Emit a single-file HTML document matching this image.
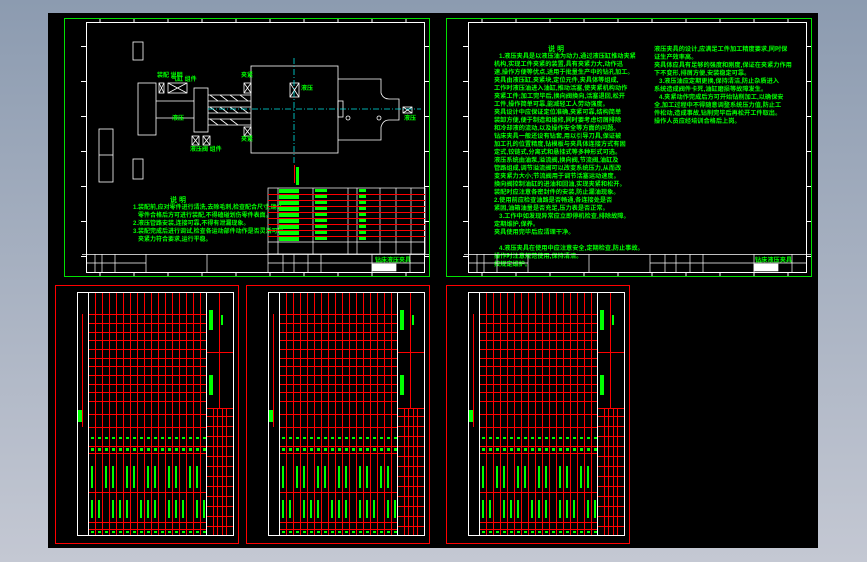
<!DOCTYPE html>
<html><head><meta charset="utf-8">
<style>
html,body{margin:0;padding:0;width:867px;height:562px;overflow:hidden;background:linear-gradient(#8c9bb0,#c4c8d3);}
svg{position:absolute;left:0;top:0}
text{font-family:"Liberation Sans","Noto Sans CJK SC",sans-serif;fill:#00ff00;font-weight:bold}
</style></head><body>
<svg id="s" width="867" height="562" viewBox="0 0 867 562" xmlns="http://www.w3.org/2000/svg">
<rect x="48" y="13" width="770" height="535" fill="#000"/>
<rect x="64.5" y="18.5" width="365" height="258" fill="none" stroke="#00e000" stroke-width="1"/>
<rect x="86.5" y="22.5" width="338" height="250" fill="none" stroke="#fff" stroke-width="1"/>
<g fill="none" stroke="#fff" stroke-width="0.8">
<rect x="133" y="42" width="10" height="18"/>
<rect x="138" y="83" width="18" height="52"/>
<line x1="156" y1="101" x2="194" y2="101"/><line x1="156" y1="118" x2="194" y2="118"/>
<rect x="194" y="88" width="14" height="44"/>
<rect x="251" y="66" width="87" height="87"/>
<path d="M338 79H381V93Q383 99 389 99H399V120H389Q383 120 381 127V140H338"/>
<rect x="99" y="129" width="14" height="53"/><line x1="99" y1="155" x2="113" y2="155"/>
<rect x="133" y="159" width="10" height="20"/>
<path d="M208 95H251M208 101H251M208 107H251M208 113H251M208 119H251M208 125H251"/>
<path d="M210 95l8 6M220 95l8 6M230 95l8 6M240 95l8 6M210 107l8 6M220 107l8 6M230 107l8 6M240 107l8 6M210 119l8 6M220 119l8 6M230 119l8 6"/>
<g id="xb"></g>
<circle cx="348" cy="118" r="2"/><circle cx="379" cy="118" r="2"/>
<rect x="338" y="101" width="5" height="16"/>
</g>
<g stroke="#00e5e5" stroke-width="0.8" stroke-dasharray="6 2 1 2">
<line x1="208" y1="109" x2="421" y2="109"/><line x1="294" y1="58" x2="294" y2="163"/>
</g>
<line x1="294.5" y1="165" x2="294.5" y2="183" stroke="#f00"/>
<rect x="296" y="167" width="3" height="18" fill="#0f0"/>
<g font-size="6">
<text x="157" y="77">装配 说明</text><text x="171" y="81">气缸 组件</text>
<text x="241" y="77">夹紧</text><text x="301" y="90">液压</text>
<text x="172" y="120">液压</text><text x="190" y="151">液压阀 组件</text>
<text x="241" y="141">夹紧</text><text x="404" y="120">液压</text>
<text x="170" y="202" font-size="7">说 明</text>
<text x="133" y="209">1.装配前,应对零件进行清洗,去除毛刺,检查配合尺寸,确认</text>
<text x="138" y="217">零件合格后方可进行装配,不得磕碰划伤零件表面。</text>
<text x="133" y="225">2.液压管路安装,连接可靠,不得有泄漏现象。</text>
<text x="133" y="233">3.装配完成后进行调试,检查各运动部件动作是否灵活可靠,</text>
<text x="138" y="241">夹紧力符合要求,运行平稳。</text>
<text x="375" y="262">钻床液压夹具</text>
</g>
<g id="tb1" stroke="#fff" stroke-width="0.7" fill="none"></g>
<rect x="446.5" y="18.5" width="365" height="258" fill="none" stroke="#00e000"/>
<rect x="468.5" y="22.5" width="338" height="250" fill="none" stroke="#fff"/>
<g font-size="6.2">
<text x="548" y="51" font-size="7">说 明</text>
<text x="499" y="58">1.液压夹具是以液压油为动力,通过液压缸推动夹紧</text>
<text x="494" y="66">机构,实现工件夹紧的装置,具有夹紧力大,动作迅</text>
<text x="494" y="74">速,操作方便等优点,适用于批量生产中的钻孔加工。</text>
<text x="494" y="82">夹具由液压缸,夹紧块,定位元件,夹具体等组成,</text>
<text x="494" y="90">工作时液压油进入油缸,推动活塞,使夹紧机构动作</text>
<text x="494" y="98">夹紧工件;加工完毕后,换向阀换向,活塞退回,松开</text>
<text x="494" y="106">工件,操作简单可靠,能减轻工人劳动强度。</text>
<text x="494" y="114">夹具设计中应保证定位准确,夹紧可靠,结构简单</text>
<text x="494" y="122">装卸方便,便于制造和维修,同时要考虑切屑排除</text>
<text x="494" y="130">和冷却液的流动,以及操作安全等方面的问题。</text>
<text x="494" y="138">钻床夹具一般还设有钻套,用以引导刀具,保证被</text>
<text x="494" y="146">加工孔的位置精度,钻模板与夹具体连接方式有固</text>
<text x="494" y="154">定式,铰链式,分离式和悬挂式等多种形式可选。</text>
<text x="494" y="162">液压系统由油泵,溢流阀,换向阀,节流阀,油缸及</text>
<text x="494" y="170">管路组成,调节溢流阀可以改变系统压力,从而改</text>
<text x="494" y="178">变夹紧力大小;节流阀用于调节活塞运动速度。</text>
<text x="494" y="186">换向阀控制油缸的进油和回油,实现夹紧和松开。</text>
<text x="494" y="194">装配时应注意各密封件的安装,防止漏油现象。</text>
<text x="494" y="202">2.使用前应检查油路是否畅通,各连接处是否</text>
<text x="494" y="210">紧固,油箱油量是否充足,压力表是否正常。</text>
<text x="499" y="218">3.工作中如发现异常应立即停机检查,排除故障。</text>
<text x="494" y="226">定期维护,保养。</text>
<text x="494" y="234">夹具使用完毕后应清理干净。</text>
<text x="499" y="250">4.液压夹具在使用中应注意安全,定期检查,防止事故。</text>
<text x="494" y="258">操作时注意规范使用,保持清洁。</text>
<text x="494" y="266">按规定维护。</text>
<text x="654" y="51">液压夹具的设计,应满足工件加工精度要求,同时保</text>
<text x="654" y="59">证生产效率高。</text>
<text x="654" y="67">夹具体应具有足够的强度和刚度,保证在夹紧力作用</text>
<text x="654" y="75">下不变形,排屑方便,安装稳定可靠。</text>
<text x="659" y="83">3.液压油应定期更换,保持清洁,防止杂质进入</text>
<text x="654" y="91">系统造成阀件卡死,油缸磨损等故障发生。</text>
<text x="659" y="99">4.夹紧动作完成后方可开始钻削加工,以确保安</text>
<text x="654" y="107">全,加工过程中不得随意调整系统压力值,防止工</text>
<text x="654" y="115">件松动,造成事故,钻削完毕后再松开工件取出。</text>
<text x="654" y="123">操作人员应经培训合格后上岗。</text>
<text x="755" y="262">钻床液压夹具</text>
</g>
<g id="tb2" stroke="#fff" stroke-width="0.7" fill="none"></g>
<g id="bot"></g>
</svg>
<script>
var NS="http://www.w3.org/2000/svg";
function el(p,t,a){var e=document.createElementNS(NS,t);for(var k in a)e.setAttribute(k,a[k]);p.appendChild(e);return e;}
function ln(p,x1,y1,x2,y2,c){return el(p,'line',{x1:x1,y1:y1,x2:x2,y2:y2,stroke:c,'stroke-width':1});}
var s=document.getElementById('s');
var xb=document.getElementById('xb');
[[168,83,19,10],[159,83,5,10],[244,83,7,10],[244,127,7,9],[290,83,9,14],[192,136,7,9],[203,136,7,9],[403,107,9,6]].forEach(function(b){
 el(xb,'rect',{x:b[0],y:b[1],width:b[2],height:b[3]});
 el(xb,'path',{d:'M'+b[0]+' '+b[1]+'l'+b[2]+' '+b[3]+'M'+(b[0]+b[2])+' '+b[1]+'l'+(-b[2])+' '+b[3]});
});
[0,382].forEach(function(o){
 var i,xx,yy;
 for(xx=100;xx<425;xx+=34){ln(s,xx+o,19,xx+o,22,'#fff');ln(s,xx+o,273,xx+o,276,'#fff');}
 for(yy=46;yy<270;yy+=35){ln(s,81+o,yy+.5,86+o,yy+.5,'#fff');ln(s,425+o,yy+.5,429+o,yy+.5,'#fff');}
 var t=document.getElementById(o?'tb2':'tb1');
 el(t,'line',{x1:82+o,y1:254.5,x2:429+o,y2:254.5});
 el(t,'line',{x1:86+o,y1:263,x2:146+o,y2:263});
 [95,102,115,146,207].forEach(function(v){el(t,'line',{x1:v+o,y1:254,x2:v+o,y2:272});});
 [268,283,294,308,321,372,410].forEach(function(v){el(t,'line',{x1:v+o,y1:254,x2:v+o,y2:272});});
 el(t,'line',{x1:268+o,y1:263,x2:321+o,y2:263});el(t,'line',{x1:321+o,y1:263,x2:425+o,y2:263});
 el(t,'rect',{x:372+o,y:264,width:24,height:7,fill:'#fff'});
});
var t1=document.getElementById('tb1');
el(t1,'rect',{x:268,y:188,width:157,height:66});
[278,313,348,357,380,396,411].forEach(function(v){el(t1,'line',{x1:v,y1:188,x2:v,y2:254});});
el(t1,'line',{x1:268,y1:242,x2:425,y2:242});
[194,200,206,212,218,224,230,236].forEach(function(v){ln(s,268,v+.5,425,v+.5,'#f00');});
for(var i=0;i<9;i++){el(s,'rect',{x:279,y:189+i*6,width:20,height:4,fill:'#0f0'});el(s,'rect',{x:315,y:189+i*6,width:12,height:3,fill:'#0f0'});el(s,'rect',{x:359,y:189+i*6,width:7,height:3,fill:'#0f0'});}
var bot=document.getElementById('bot');
[0,191,391].forEach(function(o){
 var cx,cy,k;
 el(bot,'rect',{x:55.5+o,y:285.5,width:183,height:258,fill:'none',stroke:'#f00'});
 for(k=1;k<17;k++){cx=88.5+k*7+o;ln(bot,cx,292,cx,536,'#f00');}
 [314,323,332,340,349,358,366,375,384,392,401,414,427,446,453,492,522,529].forEach(function(v){ln(bot,88+o,v+.5,206+o,v+.5,'#f00');});
 ln(bot,82.5+o,314,82.5+o,427,'#f00');
 ln(bot,219.5+o,292,219.5+o,408,'#f00');
 ln(bot,206+o,352.5,233+o,352.5,'#f00');
 ln(bot,206+o,408.5,233+o,408.5,'#f00');
 [213,217,222,226].forEach(function(v){ln(bot,v+.5+o,408,v+.5+o,536,'#f00');});
 for(cy=416;cy<536;cy+=10)ln(bot,206+o,cy+.5,233+o,cy+.5,'#f00');
 ln(bot,88.5+o,292,88.5+o,536,'#fff');
 ln(bot,206.5+o,292,206.5+o,536,'#fff');
 el(bot,'rect',{x:77.5+o,y:292.5,width:156,height:243,fill:'none',stroke:'#fff'});
 var G={fill:'#0f0'};
 el(bot,'rect',Object.assign({x:209+o,y:310,width:4,height:20},G));
 el(bot,'rect',Object.assign({x:209+o,y:375,width:4,height:20},G));
 el(bot,'rect',Object.assign({x:221+o,y:315,width:2,height:10},G));
 el(bot,'rect',Object.assign({x:78+o,y:410,width:4,height:12},G));
 for(k=0;k<17;k++){
  cx=90+k*7+o;
  el(bot,'rect',Object.assign({x:cx+1,y:437,width:3,height:2},G));
  el(bot,'rect',Object.assign({x:cx+1,y:448,width:3,height:3},G));
  el(bot,'rect',Object.assign({x:cx+1,y:531,width:3,height:2},G));
  if(k%3!=1){el(bot,'rect',Object.assign({x:cx+1,y:466,width:2,height:22},G));}
  if(k%4!=2){el(bot,'rect',Object.assign({x:cx+1,y:500,width:2,height:18},G));}
 }
});
</script>
</body></html>
